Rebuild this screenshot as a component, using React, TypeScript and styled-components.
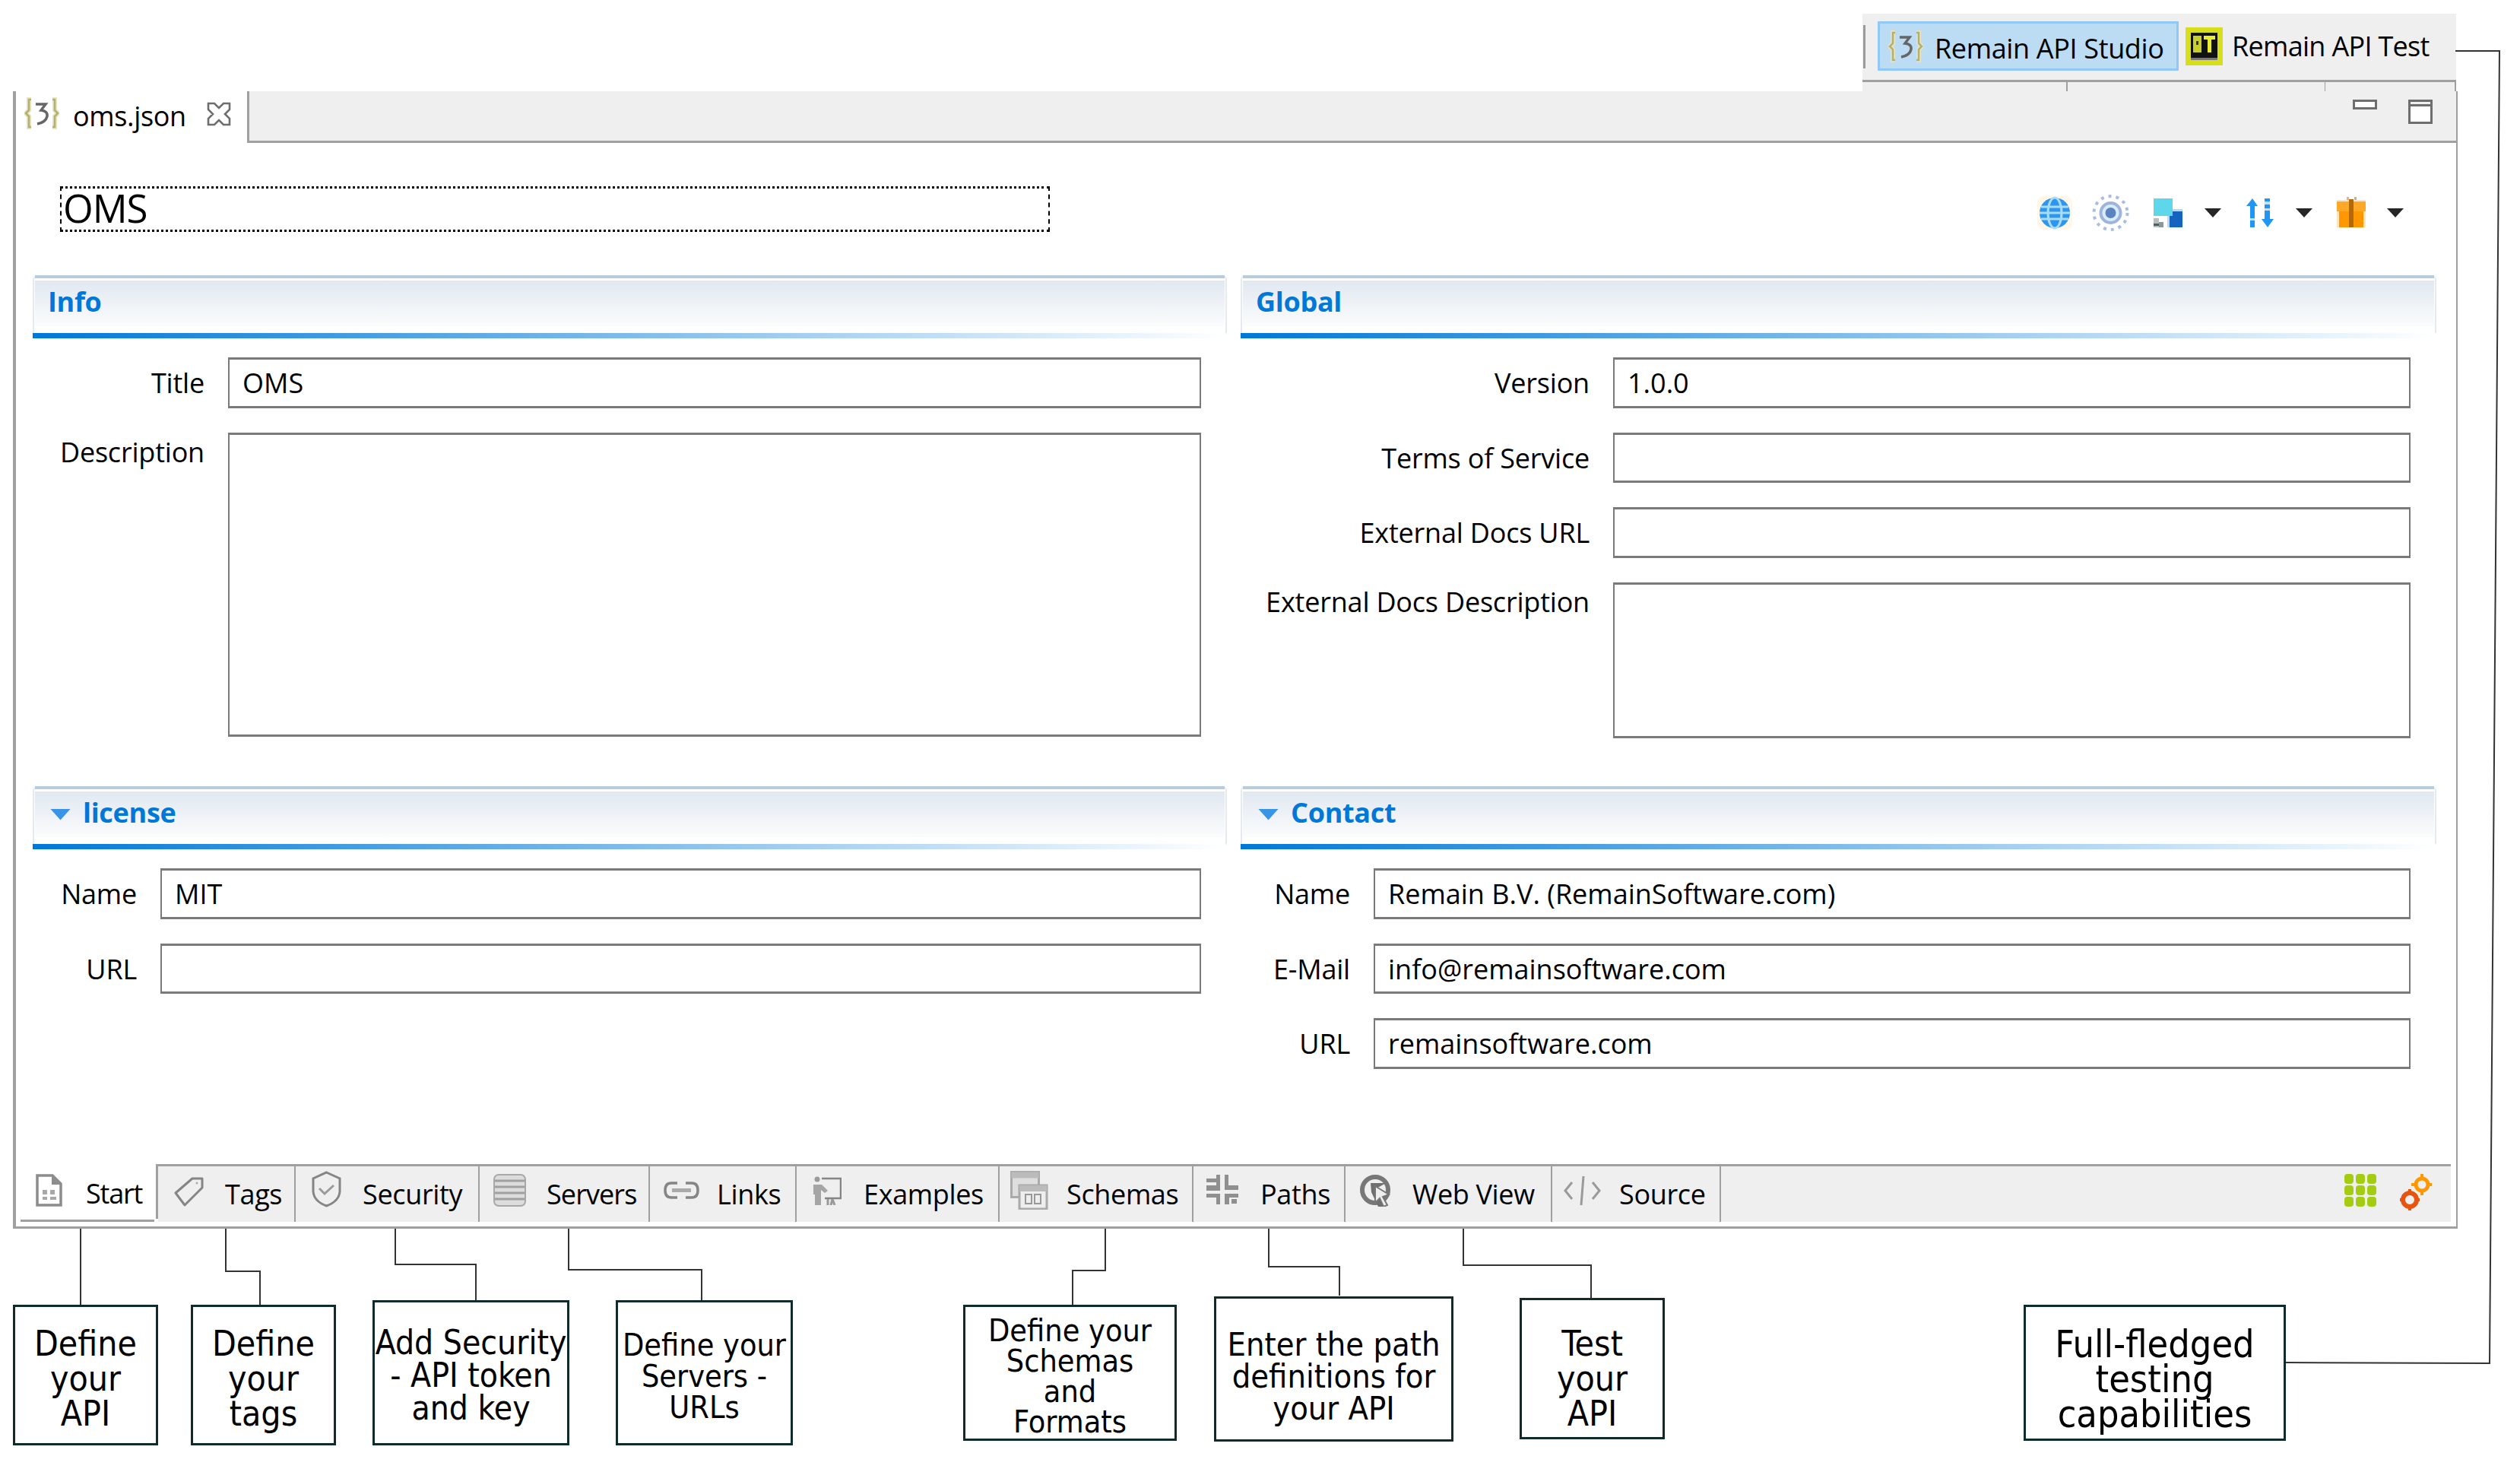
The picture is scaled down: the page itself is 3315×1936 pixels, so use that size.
import React from 'react';
import styled, { createGlobalStyle } from 'styled-components';

const GlobalStyle = createGlobalStyle`
  html, body {
    margin: 0;
    padding: 0;
    background: #fff;
  }
  * {
    box-sizing: border-box;
  }
`;

const UI_FONT = `"Open Sans", "Noto Sans", "Liberation Sans", sans-serif`;
const LINE = '#a0a0a0';
const GREY = '#efefef';

/* ---------- icons ---------- */

const BraceIcon = () => (
  <svg width="46" height="42" viewBox="0 0 46 42">
    <g fill="none" stroke="#e6e4c8" strokeWidth="6">
      <path d="M9 3 H6 V17 L2 21 L6 25 V39 H9" />
      <path d="M37 3 H40 V17 L44 21 L40 25 V39 H37" />
    </g>
    <g fill="none" stroke="#b5b06a" strokeWidth="2.5">
      <path d="M9 3 H6 V17 L2 21 L6 25 V39 H9" />
      <path d="M37 3 H40 V17 L44 21 L40 25 V39 H37" />
    </g>
    <path d="M15 9 H28 L22 17 Q31 18 30 25 Q28 33 17 35" fill="none" stroke="#666" strokeWidth="3.5" />
  </svg>
);

const CloseIcon = () => (
  <svg width="32" height="32" viewBox="0 0 32 32">
    <path
      d="M2 2 H10 L16 8 L22 2 H30 V10 L24 16 L30 22 V30 H22 L16 24 L10 30 H2 V22 L8 16 L2 10 Z"
      fill="none"
      stroke="#6e6e6e"
      strokeWidth="2.6"
    />
  </svg>
);

const RtLogo = () => (
  <svg width="49" height="50" viewBox="0 0 49 50">
    <rect width="49" height="50" fill="#d7df1d" />
    <rect x="7" y="7" width="35" height="36" fill="#111" />
    <rect x="10" y="11" width="11" height="22" fill="#c9cf2a" />
    <rect x="24" y="11" width="15" height="5" fill="#e8ec35" />
    <rect x="29" y="11" width="5" height="22" fill="#e8ec35" />
    <rect x="14" y="18" width="3" height="5" fill="#333" />
    <rect x="7" y="40" width="35" height="3" fill="#777" />
  </svg>
);

const MinimizeIcon = () => (
  <svg width="32" height="13" viewBox="0 0 32 13">
    <rect x="1.5" y="1.5" width="29" height="10" fill="#fff" stroke="#6e6e6e" strokeWidth="3" />
  </svg>
);

const MaximizeIcon = () => (
  <svg width="32" height="32" viewBox="0 0 32 32">
    <rect x="1.5" y="1.5" width="29" height="29" fill="#fff" stroke="#6e6e6e" strokeWidth="3" />
    <rect x="1.5" y="1.5" width="29" height="6" fill="#efefef" stroke="#6e6e6e" strokeWidth="3" />
  </svg>
);

const GlobeIcon = () => (
  <svg width="50" height="46" viewBox="0 0 50 46">
    <rect x="2" y="1" width="46" height="44" rx="8" fill="#fff8e8" />
    <circle cx="25" cy="23" r="20" fill="#2f96ee" />
    <g fill="none" stroke="#a8dcfb" strokeWidth="3">
      <path d="M7 15 H43 M5 23 H45 M7 31 H43" />
      <ellipse cx="25" cy="23" rx="9" ry="20" />
    </g>
  </svg>
);

const TargetIcon = () => (
  <svg width="51" height="50" viewBox="0 0 51 50">
    <circle cx="25.5" cy="25" r="22" fill="none" stroke="#a9bde0" strokeWidth="4" strokeDasharray="4 6" />
    <circle cx="25.5" cy="25" r="13" fill="#d6ecfb" stroke="#9fb4db" strokeWidth="4" />
    <circle cx="25.5" cy="25" r="7" fill="#5b83c0" />
  </svg>
);

const StackIcon = () => (
  <svg width="38" height="38" viewBox="0 0 38 38">
    <rect x="18" y="14" width="20" height="24" fill="#bcd8f3" />
    <rect x="21" y="17" width="17" height="21" fill="#1565c0" />
    <rect width="25" height="23" fill="#5fd7ea" />
    <rect y="26" width="7" height="12" fill="#b9bcbc" />
    <rect y="33" width="13" height="3" fill="#4a6066" />
    <rect x="7" y="31" width="6" height="7" fill="#8b9898" />
  </svg>
);

const DropArrow = () => (
  <svg width="22" height="12" viewBox="0 0 22 12">
    <path d="M0 0 H22 L11 12 Z" fill="#262626" />
  </svg>
);

const SortIcon = () => (
  <svg width="38" height="38" viewBox="0 0 38 38">
    <path d="M9 0 L16 10 H12 V38 H6 V10 H1 Z" fill="#2196f3" />
    <path d="M29 38 L37 27 H32 V0 H25 V27 H21 Z" fill="#2196f3" />
    <path d="M6 26 H12 V29 H6 Z M25 4 H32 V8 H25 Z M25 13 H32 V16 H25 Z" fill="#bfe0fb" />
  </svg>
);

const GiftIcon = () => (
  <svg width="38" height="42" viewBox="0 0 38 42">
    <rect y="4" width="38" height="36" fill="#ffd08a" opacity="0.6" />
    <rect x="0" y="6" width="38" height="13" fill="#ffa726" />
    <rect x="3" y="19" width="32" height="21" fill="#ff9800" />
    <rect x="16" y="3" width="6" height="37" fill="#b3690a" />
    <rect x="13" y="0" width="3" height="4" fill="#f0b070" />
    <rect x="23" y="0" width="3" height="4" fill="#d0b080" />
  </svg>
);

const DocIcon = () => (
  <svg width="37" height="43" viewBox="0 0 37 43">
    <path d="M3 2 H23 L34 13 V41 H3 Z" fill="#fff" stroke="#8c8c8c" strokeWidth="3.5" />
    <path d="M22 3 V14 H33" fill="#8c8c8c" />
    <path d="M10 21 h6 v6 h-6 Z M20 21 h6 v6 h-6 Z M10 30 h6 v4 h-6 Z M20 30 h8 v4 h-8 Z" fill="#a8a8a8" />
  </svg>
);

const TagIcon = () => (
  <svg width="41" height="41" viewBox="0 0 41 41">
    <path d="M25 3 H38 V15 L15 38 L3 22 Z" fill="none" stroke="#858585" strokeWidth="3" strokeLinejoin="round" />
    <circle cx="31" cy="9" r="1.5" fill="#aaa" />
  </svg>
);

const ShieldIcon = () => (
  <svg width="39" height="48" viewBox="0 0 39 48">
    <path d="M19.5 2 L37 10 V27 Q36 40 19.5 46 Q3 40 2 27 V10 Z" fill="none" stroke="#858585" strokeWidth="3" />
    <path d="M10 23 L17 30 L29 19" fill="none" stroke="#9a9a9a" strokeWidth="3" />
  </svg>
);

const ServersIcon = () => (
  <svg width="43" height="43" viewBox="0 0 43 43">
    <rect x="1" y="1" width="41" height="41" rx="6" fill="#dcdcdc" stroke="#a8a8a8" strokeWidth="2" />
    <path d="M2 9 H41 M2 17 H41 M2 25 H41 M2 33 H41" stroke="#a0a0a0" strokeWidth="3" />
  </svg>
);

const LinkIcon = () => (
  <svg width="47" height="23" viewBox="0 0 47 23">
    <g fill="none" stroke="#858585" strokeWidth="3.5">
      <path d="M18 2 H10 Q2 2 2 11.5 Q2 21 10 21 H18" />
      <path d="M29 2 H37 Q45 2 45 11.5 Q45 21 37 21 H29" />
    </g>
    <rect x="11" y="9" width="25" height="5" fill="#aaa" />
  </svg>
);

const ExamplesIcon = () => (
  <svg width="38" height="38" viewBox="0 0 38 38">
    <circle cx="6" cy="4" r="3.5" fill="#9a9a9a" />
    <path d="M12 3 H37 V29 H16" fill="none" stroke="#858585" strokeWidth="2.5" />
    <path d="M1 11 H12 L20 19 L16 22 L11 18 V38 H3 V24 H1 Z" fill="#a5a5a5" />
    <path d="M20 30 V38 M26 30 L24 38 M26 30 L29 38" stroke="#999" strokeWidth="3" />
  </svg>
);

const SchemasIcon = () => (
  <svg width="50" height="51" viewBox="0 0 50 51">
    <rect x="1.5" y="1.5" width="36" height="33" fill="#dedede" stroke="#aaa" strokeWidth="3" />
    <rect x="1.5" y="1.5" width="36" height="8" fill="#bbb" />
    <rect x="12" y="19" width="36" height="31" fill="#eee" stroke="#aaa" strokeWidth="3" />
    <rect x="12" y="19" width="36" height="8" fill="#bbb" />
    <path d="M20 31 h8 v12 h-8 Z M32 31 h8 v12 h-8 Z" fill="none" stroke="#999" strokeWidth="2" />
  </svg>
);

const PathsIcon = () => (
  <svg width="42" height="39" viewBox="0 0 42 39">
    <path
      d="M0 5 H14 V10 H0 Z M0 14 H13 V0 H18 V21 H0 Z M24 0 H29 V14 H42 V20 H24 Z M0 25 H18 V39 H13 V30 H0 Z M24 25 H42 V30 H30 V39 H24 Z M33 32 H40 V38 H33 Z"
      fill="#8f8f8f"
    />
  </svg>
);

const WebViewIcon = () => (
  <svg width="43" height="43" viewBox="0 0 43 43">
    <circle cx="20" cy="21" r="17" fill="none" stroke="#777" strokeWidth="6" />
    <path d="M14 12 H34 L20 20 L31 43 H24 L15 24 Z" fill="#6f6f6f" />
    <path d="M20 16 L38 27 L30 30 L36 41 L31 43 L26 32 L20 38 Z" fill="#eee" stroke="#777" strokeWidth="2" />
  </svg>
);

const SourceIcon = () => (
  <svg width="49" height="38" viewBox="0 0 49 38">
    <g fill="none" stroke="#9a9a9a" strokeWidth="3">
      <path d="M11 8 L2 19 L11 30" />
      <path d="M38 8 L47 19 L38 30" />
      <path d="M26 0 L23 38" />
    </g>
  </svg>
);

const DotsIcon = () => (
  <svg width="43" height="44" viewBox="0 0 43 44">
    <g fill="#a4cc10">
      {[0, 15, 30].map((y) =>
        [0, 15, 30].map((x) => <rect key={`${x}-${y}`} x={x} y={y} width="12" height="13" rx="4" />),
      )}
    </g>
  </svg>
);

const GearsIcon = () => (
  <svg width="42" height="48" viewBox="0 0 42 48">
    <circle cx="29" cy="14" r="8" fill="none" stroke="#ff9800" strokeWidth="5" />
    <path d="M29 0 V28 M15 14 H42" stroke="#ff9800" strokeWidth="4" strokeDasharray="4 20" />
    <circle cx="13" cy="34" r="9" fill="none" stroke="#e65510" strokeWidth="6" />
    <path d="M13 20 V48 M0 34 H26" stroke="#e65510" strokeWidth="4" strokeDasharray="4 20" />
  </svg>
);

/* ---------- perspective bar ---------- */

const Page = styled.div`
  position: relative;
  width: 3315px;
  height: 1936px;
  padding-top: 18px;
  overflow: hidden;
  background: #fff;
  color: #000;
  font-family: ${UI_FONT};
  font-size: 36px;
  letter-spacing: -0.35px;
`;

const PerspectiveBar = styled.div`
  width: 781px;
  margin-left: 2450px;
  background: ${GREY};
`;

const PerspectiveRow = styled.div`
  display: flex;
  align-items: flex-start;
  height: 90px;
  padding-top: 10px;
  border-bottom: 3px solid ${LINE};
`;

const BarGrip = styled.div`
  width: 3px;
  height: 57px;
  margin: 5px 16px 0 1px;
  background: #9a9a9a;
`;

const PerspectiveButton = styled.div<{ $active?: boolean }>`
  display: flex;
  align-items: center;
  gap: ${(p) => (p.$active ? '15px' : '12px')};
  height: 65px;
  width: ${(p) => (p.$active ? '396px' : 'auto')};
  margin-left: ${(p) => (p.$active ? '0' : '9px')};
  padding-left: ${(p) => (p.$active ? '11px' : '0')};
  background: ${(p) => (p.$active ? '#bcdcf4' : 'transparent')};
  border: ${(p) => (p.$active ? '3px solid #90c8f8' : 'none')};
  white-space: nowrap;

  & > span {
    margin-top: ${(p) => (p.$active ? '5px' : '0')};
    letter-spacing: ${(p) => (p.$active ? '-0.35px' : '-0.7px')};
  }
`;

const TickStrip = styled.div`
  display: flex;
  height: 12px;
  padding-left: 268px;
`;

const Tick = styled.span<{ $gap: number }>`
  width: 2px;
  height: 12px;
  margin-left: ${(p) => p.$gap}px;
  background: ${LINE};
`;

/* ---------- editor window ---------- */

const EditorWindow = styled.div`
  display: flex;
  flex-direction: column;
  width: 3216px;
  height: 1496px;
  margin-left: 17px;
  border-left: 4px solid ${LINE};
  border-right: 2px solid ${LINE};
  border-bottom: 3px solid ${LINE};
`;

const TabHeader = styled.div`
  display: flex;
  height: 68px;
  flex: none;
`;

const FileTab = styled.div`
  display: flex;
  align-items: flex-start;
  width: 304px;
  padding: 8px 0 0 11px;
  white-space: nowrap;
`;

const FileName = styled.span`
  margin: 0 27px 0 18px;
`;

const CloseSlot = styled.span`
  margin-top: 6px;
  line-height: 0;
`;

const HeaderFill = styled.div`
  flex: 1;
  display: flex;
  justify-content: flex-end;
  gap: 41px;
  padding: 11px 31px 0 0;
  background: ${GREY};
  border-left: 3px solid ${LINE};
  border-bottom: 3px solid ${LINE};

  & > svg {
    flex: none;
  }
`;

const EditorBody = styled.div`
  flex: 1;
  display: flex;
  flex-direction: column;
  padding: 57px 26px 0 22px;
`;

const TitleRow = styled.div`
  display: flex;
  justify-content: space-between;
  align-items: center;
  height: 60px;
  margin-bottom: 57px;
`;

const TitleField = styled.div`
  width: 1302px;
  height: 60px;
  margin-left: 36px;
  padding-left: 2px;
  border-block: 3px dotted #000;
  border-inline: 2px dashed #000;
  font-size: 51px;
  line-height: 51px;
  letter-spacing: -1px;
`;

const Toolbar = styled.div`
  display: flex;
  align-items: center;
  margin: 10px 43px 0 0;
`;

const ToolSlot = styled.span<{ $gap: number }>`
  display: flex;
  margin-left: ${(p) => p.$gap}px;
`;

const SectionGrid = styled.div`
  display: grid;
  grid-template-columns: 1571px 1573px;
  grid-template-rows: 672px 1fr;
  column-gap: 18px;
`;

const SectionHead = styled.div`
  height: 83px;
  padding: 0 1px;
  border-inline: 2px solid #e3eaf2;
  border-radius: 6px 6px 0 0;
`;

const HeadTop = styled.div`
  height: 7px;
  border-top: 4px solid #b8ccdd;
`;

const HeadBand = styled.div`
  display: flex;
  align-items: center;
  gap: 16px;
  height: 60px;
  padding: 0 0 6px 17px;
  background: linear-gradient(180deg, #e1e8f1, #fbfcfd);
  color: #0078d7;
  font-weight: 700;
  font-size: 36px;
  letter-spacing: -0.3px;
`;

const HeadRule = styled.div`
  height: 7px;
  margin: 9px -3px 0;
  background: linear-gradient(90deg, #0078d7, #fff);
`;

const TwistArrow = styled.span`
  width: 27px;
  height: 15px;
  margin-left: 3px;
  margin-top: 6px;
  background: #3a94e6;
  clip-path: polygon(0 0, 100% 0, 50% 100%);
`;

const FormGrid = styled.div<{ $labelWidth: number }>`
  display: grid;
  grid-template-columns: ${(p) => p.$labelWidth}px 1fr;
  column-gap: 31px;
  row-gap: 32px;
  padding: 25px 34px 0 0;
`;

const FieldLabel = styled.label<{ $multi?: boolean }>`
  height: ${(p) => (p.$multi ? 'auto' : '66.5px')};
  text-align: right;
  white-space: nowrap;
  letter-spacing: -0.2px;
  line-height: ${(p) => (p.$multi ? '51px' : '68px')};
`;

const Field = styled.div<{ $height?: number }>`
  height: ${(p) => p.$height ?? 66.5}px;
  padding-left: 17px;
  border: 2px solid #7a7a7a;
  border-block-width: 3px;
  background: #fff;
  letter-spacing: 0;
  line-height: 62px;
  white-space: nowrap;
`;

/* ---------- bottom tabs ---------- */

const TabStrip = styled.div`
  display: flex;
  flex: none;
  height: 76px;
  margin: 0 7px 6px 0;
`;

const PageTab = styled.div<{ $width: number; $active?: boolean }>`
  position: relative;
  flex: none;
  display: flex;
  align-items: center;
  width: ${(p) => p.$width}px;
  background: ${(p) => (p.$active ? '#fff' : GREY)};
  border-top: ${(p) => (p.$active ? 'none' : `3px solid ${LINE}`)};
  border-right: 2px solid ${(p) => (p.$active ? 'transparent' : LINE)};
  white-space: nowrap;

  ${(p) =>
    p.$active &&
    `
    &::after {
      content: '';
      position: absolute;
      left: 6px;
      right: 3px;
      bottom: 0;
      height: 3px;
      background: ${LINE};
    }
    &::before {
      content: '';
      position: absolute;
      right: -2px;
      top: 0;
      bottom: 4px;
      width: 3px;
      background: ${LINE};
    }
  `}
`;

const TabIconSlot = styled.span<{ $left: number; $top: number; $slot: number }>`
  flex: none;
  display: flex;
  align-items: flex-start;
  align-self: flex-start;
  width: ${(p) => p.$slot}px;
  padding: ${(p) => p.$top}px 0 0 ${(p) => p.$left}px;
`;

const TabLabel = styled.span<{ $spacing: number }>`
  letter-spacing: ${(p) => p.$spacing}px;
`;

const StripFill = styled.div`
  flex: 1;
  display: flex;
  justify-content: flex-end;
  align-items: flex-start;
  gap: 30px;
  padding: 10px 25px 0 0;
  background: ${GREY};
  border-top: 3px solid ${LINE};
`;

/* ---------- callouts ---------- */

const CalloutRow = styled.div`
  display: flex;
  align-items: flex-start;
  margin-top: 89px;
`;

const Callout = styled.div<{
  $gap: number;
  $top: number;
  $width: number;
  $height: number;
  $size: number;
  $lead: number;
  $shift: number;
}>`
  flex: none;
  display: flex;
  align-items: center;
  justify-content: center;
  width: ${(p) => p.$width}px;
  height: ${(p) => p.$height}px;
  margin-left: ${(p) => p.$gap}px;
  margin-top: ${(p) => p.$top}px;
  padding-top: ${(p) => p.$shift}px;
  background: #fff;
  border: 3px solid #0f2b2b;
  text-align: center;
  white-space: nowrap;
  letter-spacing: 0;
  font-family: "DejaVu Sans Condensed", "DejaVu Sans", sans-serif;
  font-stretch: condensed;
  font-size: ${(p) => p.$size}px;
  line-height: ${(p) => p.$lead}px;
`;

const ConnectorLayer = styled.svg`
  position: absolute;
  left: 0;
  top: 0;
  pointer-events: none;
`;

/* ---------- data ---------- */

const pageTabs = [
  { label: 'Start', width: 187, left: 25, top: 13, slot: 92, spacing: -1.2, icon: <DocIcon />, active: true },
  { label: 'Tags', width: 181, left: 20, top: 13, slot: 88, spacing: -0.35, icon: <TagIcon /> },
  { label: 'Security', width: 242, left: 21, top: 6, slot: 88, spacing: -0.35, icon: <ShieldIcon /> },
  { label: 'Servers', width: 224, left: 18, top: 10, slot: 88, spacing: -0.9, icon: <ServersIcon /> },
  { label: 'Links', width: 193, left: 18, top: 20, slot: 88, spacing: -0.35, icon: <LinkIcon /> },
  { label: 'Examples', width: 267, left: 21, top: 13, slot: 88, spacing: -0.35, icon: <ExamplesIcon /> },
  { label: 'Schemas', width: 255, left: 14, top: 6, slot: 88, spacing: -0.35, icon: <SchemasIcon /> },
  { label: 'Paths', width: 200, left: 17, top: 11, slot: 88, spacing: -0.35, icon: <PathsIcon /> },
  { label: 'Web View', width: 272, left: 19, top: 10, slot: 88, spacing: -0.35, icon: <WebViewIcon /> },
  { label: 'Source', width: 222, left: 15, top: 13, slot: 88, spacing: -0.35, icon: <SourceIcon /> },
];

const callouts = [
  { lines: ['Define', 'your', 'API'], gap: 17, top: 11, width: 191, height: 185, size: 46, lead: 46, shift: 8 },
  { lines: ['Define', 'your', 'tags'], gap: 43, top: 11, width: 191, height: 185, size: 46, lead: 46, shift: 8 },
  { lines: ['Add Security', '- API token', 'and key'], gap: 48, top: 5, width: 259, height: 191, size: 44, lead: 43, shift: 6 },
  { lines: ['Define your', 'Servers -', 'URLs'], gap: 61, top: 5, width: 233, height: 191, size: 41, lead: 41, shift: 10 },
  { lines: ['Define your', 'Schemas', 'and', 'Formats'], gap: 224, top: 11, width: 281, height: 179, size: 41, lead: 40, shift: 8 },
  { lines: ['Enter the path', 'definitions for', 'your API'], gap: 49, top: 0, width: 315, height: 191, size: 43, lead: 42, shift: 18 },
  { lines: ['Test', 'your', 'API'], gap: 87, top: 2, width: 191, height: 186, size: 46, lead: 46, shift: 26 },
  { lines: ['Full-fledged', 'testing', 'capabilities'], gap: 472, top: 11, width: 345, height: 179, size: 50, lead: 46, shift: 16 },
];

const connectors = [
  'M106 1616 V1716',
  'M297 1616 V1672 H342 V1716',
  'M520 1616 V1663 H626 V1710',
  'M748 1616 V1670 H923 V1710',
  'M1454 1616 V1671 H1411 V1716',
  'M1669 1616 V1666 H1762 V1704',
  'M1925 1616 V1664 H2093 V1707',
  'M3230 67 H3288 L3275 1793 L3007 1792',
];

const App = () => {
  return (
    <Page>
      <GlobalStyle />
      <PerspectiveBar>
        <PerspectiveRow>
          <BarGrip />
          <PerspectiveButton $active>
            <BraceIcon />
            <span>Remain API Studio</span>
          </PerspectiveButton>
          <PerspectiveButton>
            <RtLogo />
            <span>Remain API Test</span>
          </PerspectiveButton>
        </PerspectiveRow>
        <TickStrip>
          <Tick $gap={0} />
          <Tick $gap={338} />
          <Tick $gap={170} />
        </TickStrip>
      </PerspectiveBar>

      <EditorWindow>
        <TabHeader>
          <FileTab>
            <BraceIcon />
            <FileName>oms.json</FileName>
            <CloseSlot>
              <CloseIcon />
            </CloseSlot>
          </FileTab>
          <HeaderFill>
            <MinimizeIcon />
            <MaximizeIcon />
          </HeaderFill>
        </TabHeader>

        <EditorBody>
          <TitleRow>
            <TitleField>OMS</TitleField>
            <Toolbar>
              <GlobeIcon />
              <ToolSlot $gap={23}>
                <TargetIcon />
              </ToolSlot>
              <ToolSlot $gap={31}>
                <StackIcon />
              </ToolSlot>
              <ToolSlot $gap={29}>
                <DropArrow />
              </ToolSlot>
              <ToolSlot $gap={32}>
                <SortIcon />
              </ToolSlot>
              <ToolSlot $gap={28}>
                <DropArrow />
              </ToolSlot>
              <ToolSlot $gap={32}>
                <GiftIcon />
              </ToolSlot>
              <ToolSlot $gap={28}>
                <DropArrow />
              </ToolSlot>
            </Toolbar>
          </TitleRow>

          <SectionGrid>
            <section>
              <SectionHead>
                <HeadTop />
                <HeadBand>Info</HeadBand>
                <HeadRule />
              </SectionHead>
              <FormGrid $labelWidth={226}>
                <FieldLabel>Title</FieldLabel>
                <Field>OMS</Field>
                <FieldLabel $multi>Description</FieldLabel>
                <Field $height={400} />
              </FormGrid>
            </section>

            <section>
              <SectionHead>
                <HeadTop />
                <HeadBand>Global</HeadBand>
                <HeadRule />
              </SectionHead>
              <FormGrid $labelWidth={459}>
                <FieldLabel>Version</FieldLabel>
                <Field>1.0.0</Field>
                <FieldLabel>Terms of Service</FieldLabel>
                <Field />
                <FieldLabel>External Docs URL</FieldLabel>
                <Field />
                <FieldLabel $multi>External Docs Description</FieldLabel>
                <Field $height={205} />
              </FormGrid>
            </section>

            <section>
              <SectionHead>
                <HeadTop />
                <HeadBand>
                  <TwistArrow />
                  license
                </HeadBand>
                <HeadRule />
              </SectionHead>
              <FormGrid $labelWidth={137}>
                <FieldLabel>Name</FieldLabel>
                <Field>MIT</Field>
                <FieldLabel>URL</FieldLabel>
                <Field />
              </FormGrid>
            </section>

            <section>
              <SectionHead>
                <HeadTop />
                <HeadBand>
                  <TwistArrow />
                  Contact
                </HeadBand>
                <HeadRule />
              </SectionHead>
              <FormGrid $labelWidth={144}>
                <FieldLabel>Name</FieldLabel>
                <Field>Remain B.V. (RemainSoftware.com)</Field>
                <FieldLabel>E-Mail</FieldLabel>
                <Field>info@remainsoftware.com</Field>
                <FieldLabel>URL</FieldLabel>
                <Field>remainsoftware.com</Field>
              </FormGrid>
            </section>
          </SectionGrid>
        </EditorBody>

        <TabStrip>
          {pageTabs.map((tab) => (
            <PageTab key={tab.label} $width={tab.width} $active={tab.active}>
              <TabIconSlot $left={tab.left} $top={tab.top} $slot={tab.slot}>
                {tab.icon}
              </TabIconSlot>
              <TabLabel $spacing={tab.spacing}>{tab.label}</TabLabel>
            </PageTab>
          ))}
          <StripFill>
            <DotsIcon />
            <GearsIcon />
          </StripFill>
        </TabStrip>
      </EditorWindow>

      <CalloutRow>
        {callouts.map((c) => (
          <Callout
            key={c.lines.join(' ')}
            $gap={c.gap}
            $top={c.top}
            $width={c.width}
            $height={c.height}
            $size={c.size}
            $lead={c.lead}
            $shift={c.shift}
          >
            <div>
              {c.lines.map((line) => (
                <div key={line}>{line}</div>
              ))}
            </div>
          </Callout>
        ))}
      </CalloutRow>

      <ConnectorLayer width="3315" height="1936" viewBox="0 0 3315 1936">
        {connectors.map((d) => (
          <path key={d} d={d} fill="none" stroke="#333" strokeWidth="2" />
        ))}
      </ConnectorLayer>
    </Page>
  );
};

export default App;
